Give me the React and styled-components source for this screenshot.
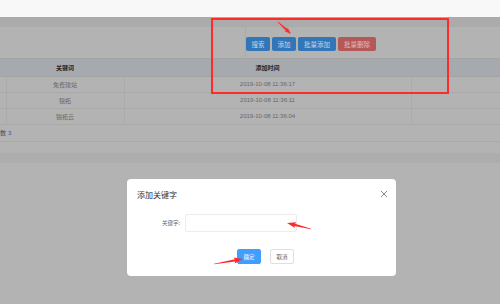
import React from "react";
import styled, { createGlobalStyle } from "styled-components";

const Global = createGlobalStyle`
  html, body { margin: 0; padding: 0; }
  body {
    width: 500px; height: 304px; overflow: hidden;
    background: #b3b3b3;
    font-family: "Liberation Sans", "Noto Sans CJK SC", sans-serif;
  }
`;

const Page = styled.div`
  position: relative;
  width: 500px;
  height: 304px;
  overflow: hidden;
  background: #b3b3b3;
`;

const TopStrip = styled.div`
  height: 17px;
  background: #f8f8f8;
`;

const Band = styled.div`
  height: ${(p) => p.$h}px;
  background: ${(p) => p.$bg};
`;

const Toolbar = styled.div`
  height: 32px;
  display: flex;
  background: #b3b3b3;
  border-bottom: 1px solid #a4a4a4;
  box-sizing: border-box;
`;

const ToolbarSpacer = styled.div`
  width: 245px;
  border-right: 1px solid #a9a9a9;
`;

const ButtonGroup = styled.div`
  display: flex;
  gap: 2px;
  padding-top: 10px;
  align-items: flex-start;
`;

const ToolButton = styled.div`
  height: 14px;
  width: ${(p) => p.$w}px;
  border-radius: 2px;
  background: ${(p) => (p.$danger ? "#b55858" : "#3276b8")};
  color: ${(p) => (p.$danger ? "#e3bcbc" : "#c6d6e8")};
  font-size: 6.5px;
  display: flex;
  align-items: center;
  justify-content: center;
`;

const Table = styled.table`
  border-collapse: collapse;
  table-layout: fixed;
  width: 500px;
`;

const HeadRow = styled.tr`
  height: 17px;
  background: #a6a9ad;
`;

const Th = styled.th`
  padding: 0;
  font-size: 6px;
  font-weight: bold;
  color: #262626;
  text-align: center;
  border-bottom: 1px solid #a3a3a3;
`;

const Row = styled.tr`
  height: 16px;
  background: #b3b3b3;
`;

const Td = styled.td`
  padding: 0;
  font-size: 6px;
  color: #676767;
  text-align: center;
  border-bottom: 1px solid #a9a9a9;
  border-left: ${(p) => (p.$first ? "none" : "1px solid #ababab")};
`;

const Summary = styled.div`
  height: 16px;
  display: flex;
  align-items: center;
  gap: 2px;
  font-size: 6px;
  color: #4a4a4a;
  border-bottom: 1px solid #a9a9a9;
`;

const Count = styled.span`
  color: #3d46c8;
`;

const Modal = styled.div`
  position: absolute;
  left: 127px;
  top: 179px;
  width: 269px;
  height: 97px;
  background: #ffffff;
  border-radius: 4px;
  box-sizing: border-box;
  display: flex;
  flex-direction: column;
`;

const ModalHeader = styled.div`
  display: flex;
  justify-content: space-between;
  align-items: center;
  padding: 9px 8px 0 10px;
  height: 12px;
`;

const ModalTitle = styled.div`
  font-size: 8px;
  color: #303133;
  font-family: "Noto Sans CJK SC", sans-serif;
`;

const Close = styled.div`
  width: 9px;
  height: 9px;
  display: flex;
  align-items: center;
  justify-content: center;
`;

const FormRow = styled.div`
  display: flex;
  align-items: center;
  margin-top: 14px;
`;

const Label = styled.div`
  width: 53px;
  text-align: right;
  font-size: 5.5px;
  color: #606266;
  font-family: "Noto Sans CJK SC", sans-serif;
`;

const Input = styled.div`
  margin-left: 5px;
  width: 112px;
  height: 18px;
  border: 1px solid #ececec;
  border-radius: 2px;
  box-sizing: border-box;
`;

const Footer = styled.div`
  display: flex;
  gap: 9px;
  padding-left: 110px;
  margin-top: 17px;
`;

const ModalButton = styled.div`
  width: 24px;
  height: 15px;
  box-sizing: border-box;
  border-radius: 2px;
  font-size: 5.5px;
  display: flex;
  align-items: center;
  justify-content: center;
  font-family: "Noto Sans CJK SC", sans-serif;
  background: ${(p) => (p.$primary ? "#409eff" : "#ffffff")};
  color: ${(p) => (p.$primary ? "#ffffff" : "#606266")};
  border: 1px solid ${(p) => (p.$primary ? "#409eff" : "#dcdfe6")};
`;

const Highlight = styled.div`
  position: absolute;
  left: 211px;
  top: 18px;
  width: 238px;
  height: 76px;
  border: 2px solid #ff2b2b;
  box-sizing: border-box;
  pointer-events: none;
`;

const AnnotationLayer = styled.svg`
  position: absolute;
  left: 0;
  top: 0;
  pointer-events: none;
`;

function arrowPoints(x1, y1, x2, y2, headLen = 8, headW = 6) {
  const dx = x2 - x1, dy = y2 - y1;
  const len = Math.hypot(dx, dy);
  const ux = dx / len, uy = dy / len;
  const nx = -uy, ny = ux;
  const neckX = x2 - ux * headLen, neckY = y2 - uy * headLen;
  const pts = [
    [x1 + nx * 0.3, y1 + ny * 0.3],
    [neckX + nx * 1.1, neckY + ny * 1.1],
    [neckX + nx * headW / 2 - ux * 1, neckY + ny * headW / 2 - uy * 1],
    [x2, y2],
    [neckX - nx * headW / 2 - ux * 1, neckY - ny * headW / 2 - uy * 1],
    [neckX - nx * 1.1, neckY - ny * 1.1],
    [x1 - nx * 0.3, y1 - ny * 0.3],
  ];
  return pts.map((p) => p.map((v) => v.toFixed(2)).join(",")).join(" ");
}

const rows = [
  ["免费建站", "2019-10-08 11:36:17"],
  ["锦拓", "2019-10-08 11:36:11"],
  ["锦拓云", "2019-10-08 11:36:04"],
];

export default function App() {
  return (
    <Page>
      <Global />
      <TopStrip />
      <Band $h={10} $bg="#ababab" />
      <Toolbar>
        <ToolbarSpacer />
        <ButtonGroup>
          <ToolButton $w={24}>搜索</ToolButton>
          <ToolButton $w={24}>添加</ToolButton>
          <ToolButton $w={38}>批量添加</ToolButton>
          <ToolButton $w={38} $danger>批量删除</ToolButton>
        </ButtonGroup>
      </Toolbar>
      <Table>
        <colgroup>
          <col style={{ width: 6 }} />
          <col style={{ width: 118 }} />
          <col style={{ width: 287 }} />
          <col style={{ width: 89 }} />
        </colgroup>
        <thead>
          <HeadRow>
            <Th />
            <Th>关键词</Th>
            <Th>添加时间</Th>
            <Th />
          </HeadRow>
        </thead>
        <tbody>
          {rows.map(([k, t]) => (
            <Row key={t}>
              <Td $first />
              <Td>{k}</Td>
              <Td>{t}</Td>
              <Td />
            </Row>
          ))}
        </tbody>
      </Table>
      <Summary>
        <span>数</span>
        <Count>3</Count>
      </Summary>
      <Band $h={11} $bg="#b3b3b3" />
      <Band $h={10} $bg="#adadad" />

      <Modal>
        <ModalHeader>
          <ModalTitle>添加关键字</ModalTitle>
          <Close>
            <svg width="8" height="8" viewBox="0 0 8 8">
              <path d="M1 1 L7 7 M7 1 L1 7" stroke="#7a7a7a" strokeWidth="0.9" />
            </svg>
          </Close>
        </ModalHeader>
        <FormRow>
          <Label>关键字:</Label>
          <Input />
        </FormRow>
        <Footer>
          <ModalButton $primary>确定</ModalButton>
          <ModalButton>取消</ModalButton>
        </Footer>
      </Modal>

      <Highlight />
      <AnnotationLayer width="500" height="304" viewBox="0 0 500 304">
        <polygon points={arrowPoints(278, 22, 291, 34, 6, 5)} fill="#ff2b2b" />
        <polygon points={arrowPoints(311, 229, 287, 223, 8, 6)} fill="#ff2b2b" />
        <polygon points={arrowPoints(214, 264, 243, 259, 8, 6)} fill="#ff2b2b" />
      </AnnotationLayer>
    </Page>
  );
}
